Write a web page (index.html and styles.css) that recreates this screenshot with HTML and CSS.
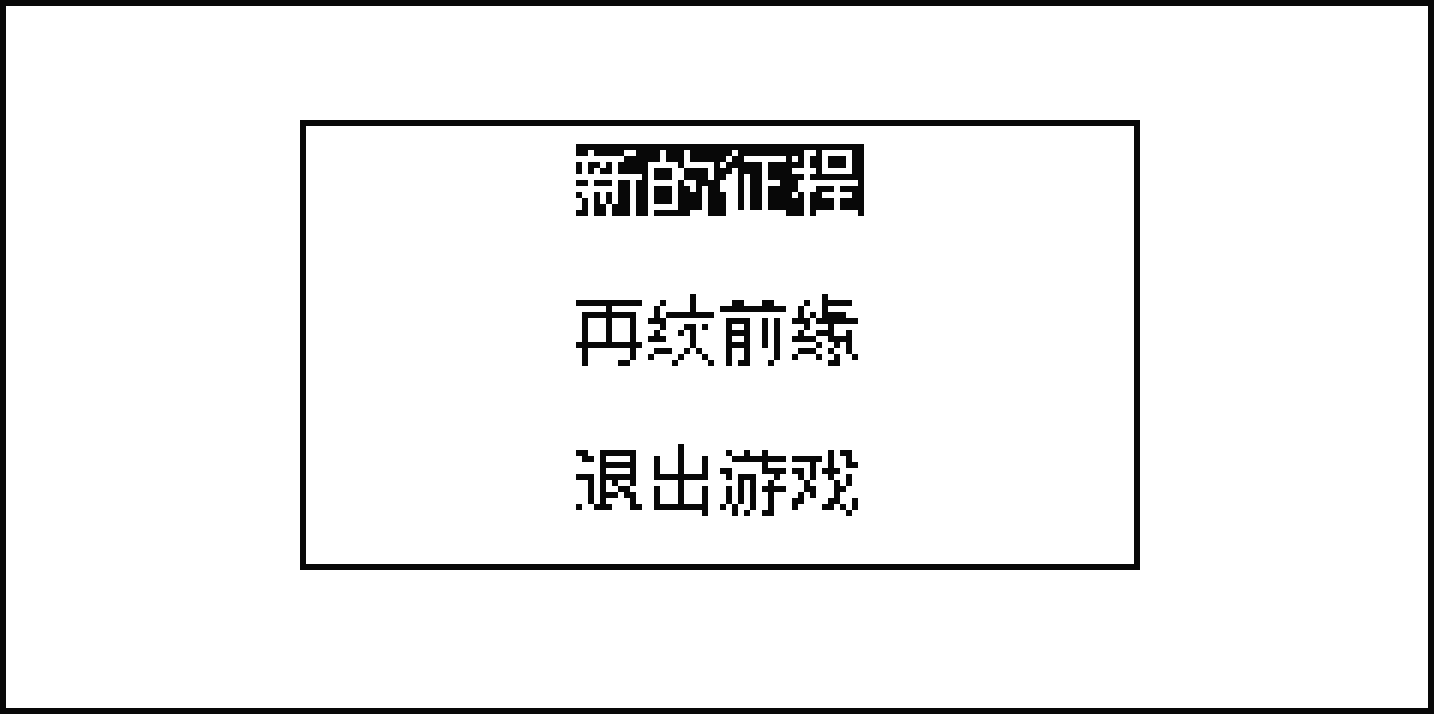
FILE: index.html
```
<!DOCTYPE html>
<html lang="zh-CN">
<head>
<meta charset="utf-8">
<title>新的征程</title>
<link rel="stylesheet" href="styles.css">
</head>
<body>
<!-- Samples one point per 6px cell and grows it to fill the cell -->
<svg class="defs" width="0" height="0" aria-hidden="true">
<filter id="pixelate" filterUnits="userSpaceOnUse" primitiveUnits="userSpaceOnUse" x="0" y="0" width="288" height="72" color-interpolation-filters="sRGB">
<feFlood x="2" y="2" width="1" height="1" flood-color="#000" result="dot"/>
<feOffset in="dot" dx="0" dy="0" x="0" y="0" width="6" height="6" result="cell"/>
<feTile in="cell" result="grid"/>
<feOffset in="SourceGraphic" dx="-4" dy="0" result="text"/>
<feComposite in="text" in2="grid" operator="in"/>
<feComponentTransfer><feFuncA type="discrete" tableValues="0 1 1 1"/></feComponentTransfer>
<feMorphology operator="dilate" radius="2" result="block"/>
<feOffset in="block" dx="1" dy="0" result="right"/>
<feMerge result="wide"><feMergeNode in="block"/><feMergeNode in="right"/></feMerge>
<feOffset in="wide" dx="0" dy="1" result="down"/>
<feMerge><feMergeNode in="wide"/><feMergeNode in="down"/></feMerge>
</filter>
</svg>
<main class="screen">
<nav class="menu">
<button class="item selected" type="button"><span class="label">新的征程</span></button>
<button class="item" type="button"><span class="label">再续前缘</span></button>
<button class="item" type="button"><span class="label">退出游戏</span></button>
</nav>
</main>
</body>
</html>
```
FILE: styles.css
```
* { box-sizing: border-box; }
body { margin: 0; background: #fff; }
.defs { position: absolute; }
.screen {
  display: flex;
  justify-content: center;
  align-items: flex-start;
  min-height: calc(100vh - 6px);
  margin-right: 6px;
  padding: 114px 288px 138px 294px;
  border: 6px solid #080808;
}
.menu {
  flex: 1;
  display: flex;
  flex-direction: column;
  align-items: center;
  gap: 78px;
  padding: 18px 0 48px;
  border: 6px solid #080808;
}
.item {
  margin: 0;
  padding: 0;
  border: 0;
  background: #fff;
  color: #080808;
  font-family: "Noto Sans CJK SC", sans-serif;
  font-size: 72px;
  line-height: 64px;
  cursor: pointer;
}
.label {
  display: block;
  padding-bottom: 8px;
  filter: url(#pixelate);
}
.selected { background: #080808; color: #fff; }
.selected .label {
  padding-bottom: 4px;
  line-height: 68px;
}
```
